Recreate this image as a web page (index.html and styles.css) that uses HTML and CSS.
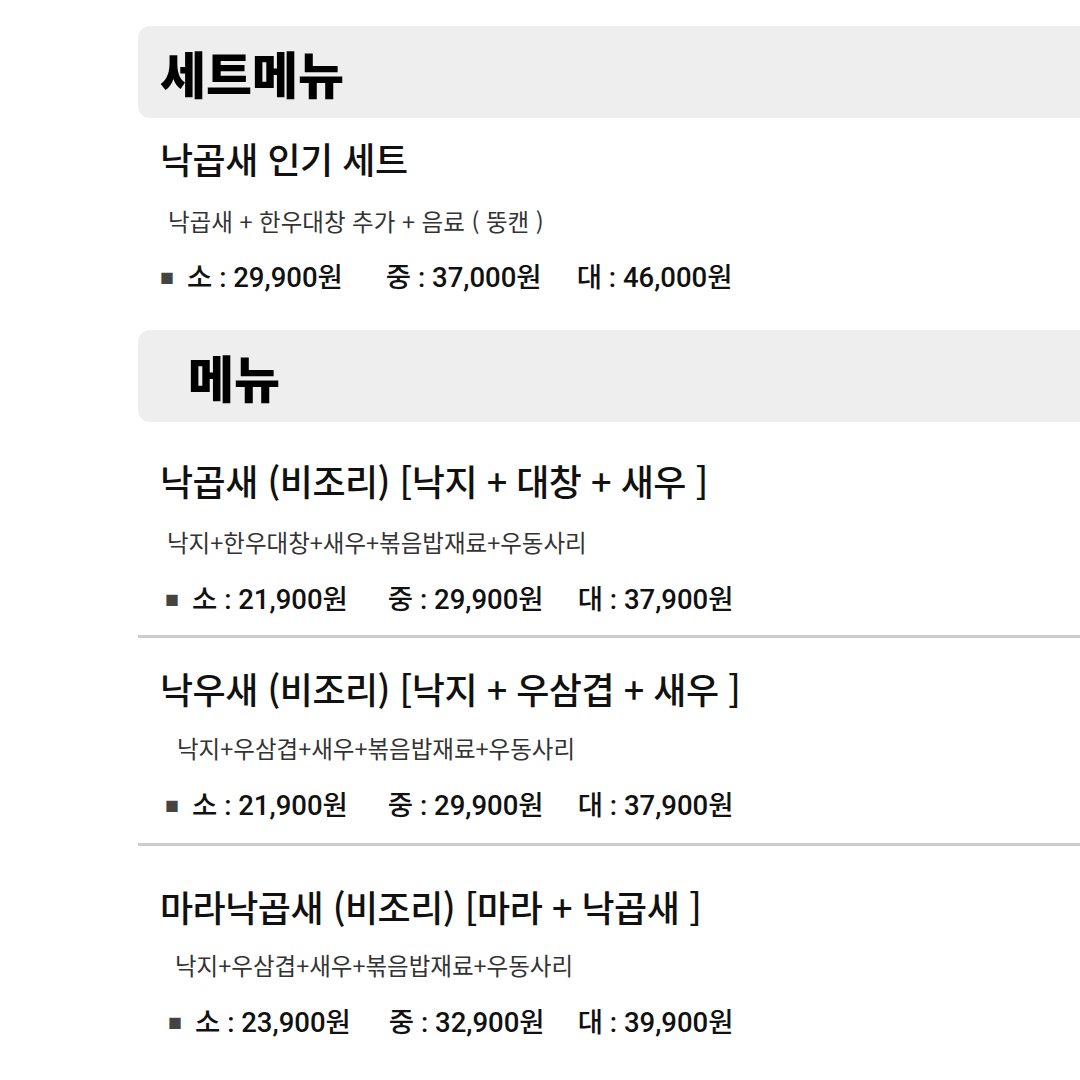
FILE: index.html
```html
<!DOCTYPE html>
<html lang="ko">
<head>
<meta charset="utf-8">
<link rel="stylesheet" href="styles.css">
</head>
<body>
<main class="page">
  <section class="section section--set">
    <h1 class="section-head"><span class="head-text">세트메뉴</span></h1>
    <div class="item">
      <h2 class="item-title">낙곱새 인기 세트</h2>
      <p class="item-desc item-desc--a">낙곱새 + 한우대창 추가 + 음료 ( 뚱캔 )</p>
      <p class="item-price item-price--a"><span class="bullet">■</span><span class="p p1">소 : 29,900원</span><span class="p p2">중 : 37,000원</span><span class="p p3">대 : 46,000원</span></p>
    </div>
  </section>

  <section class="section section--menu">
    <h1 class="section-head"><span class="head-text head-text--menu">메뉴</span></h1>
    <div class="item item--first">
      <h2 class="item-title">낙곱새 (비조리) [낙지 + 대창 + 새우 ]</h2>
      <p class="item-desc item-desc--b">낙지+한우대창+새우+볶음밥재료+우동사리</p>
      <p class="item-price item-price--b"><span class="bullet">■</span><span class="p p1">소 : 21,900원</span><span class="p p2">중 : 29,900원</span><span class="p p3">대 : 37,900원</span></p>
    </div>
    <hr class="divider">
    <div class="item item--second">
      <h2 class="item-title">낙우새 (비조리) [낙지 + 우삼겹 + 새우 ]</h2>
      <p class="item-desc item-desc--c">낙지+우삼겹+새우+볶음밥재료+우동사리</p>
      <p class="item-price item-price--b"><span class="bullet">■</span><span class="p p1">소 : 21,900원</span><span class="p p2">중 : 29,900원</span><span class="p p3">대 : 37,900원</span></p>
    </div>
    <hr class="divider divider--second">
    <div class="item item--third">
      <h2 class="item-title">마라낙곱새 (비조리) [마라 + 낙곱새 ]</h2>
      <p class="item-desc item-desc--d">낙지+우삼겹+새우+볶음밥재료+우동사리</p>
      <p class="item-price item-price--d"><span class="bullet">■</span><span class="p p1">소 : 23,900원</span><span class="p p2">중 : 32,900원</span><span class="p p3">대 : 39,900원</span></p>
    </div>
  </section>
</main>
</body>
</html>
```
FILE: styles.css
```css
html, body {
  margin: 0;
  padding: 0;
  background: #ffffff;
  overflow: hidden;
}
body {
  width: 1080px;
  height: 1080px;
  font-family: "Noto Sans CJK KR", "Noto Sans", sans-serif;
  color: #111;
}
.page {
  padding: 26px 0 0 138px;
}
.section-head {
  margin: 0;
  width: 980px;
  height: 92px;
  line-height: 92px;
  background: #eeeeee;
  border-radius: 12px;
  font-size: 50px;
  font-weight: 900;
  letter-spacing: 0;
  color: #000;
  padding-left: 22px;
  box-sizing: border-box;
}
.head-text--menu {
  margin-left: 28px;
}
.section--menu {
  margin-top: 35px;
}
.item {
  padding-left: 22px;
}
.item-title {
  margin: 20px 0 0;
  font-size: 36px;
  line-height: 40px;
  font-weight: 500;
  letter-spacing: -0.5px;
  color: #111;
}
.item--first .item-title { margin-top: 38px; }
.item--second .item-title { margin-top: 30px; }
.item--third .item-title { margin-top: 40px; }

.item-desc {
  margin: 28px 0 0;
  font-size: 23.5px;
  line-height: 30px;
  color: #333;
  font-weight: 400;
}
.item-desc--a { padding-left: 8px; }
.item-desc--b { padding-left: 7px; margin-top: 27px; }
.item-desc--c { padding-left: 17px; margin-top: 25px; }
.item-desc--d { padding-left: 15px; margin-top: 24px; }

.item-price {
  margin: 25px 0 0;
  font-family: "Roboto", "Noto Sans CJK KR", sans-serif;
  font-size: 27.5px;
  line-height: 34px;
  font-weight: 500;
  color: #111;
  display: flex;
  align-items: center;
  white-space: nowrap;
}
.item-price--b { margin-top: 26px; padding-left: 5px; }
.item-price--d { margin-top: 26px; padding-left: 8px; }

.bullet {
  font-size: 14px;
  color: #444;
  width: 27px;
  line-height: 34px;
}
.p2 { margin-left: 43px; }
.p3 { margin-left: 35px; }
.item-price--b .p2 { margin-left: 40px; }
.item-price--b .p3 { margin-left: 34px; }
.item-price--d .p2 { margin-left: 38px; }
.item-price--d .p3 { margin-left: 33px; }

.divider {
  margin: 18px 0 0;
  border: 0;
  height: 3px;
  background: #cccccc;
  width: 960px;
}
.divider--second { margin-top: 20px; }
```
